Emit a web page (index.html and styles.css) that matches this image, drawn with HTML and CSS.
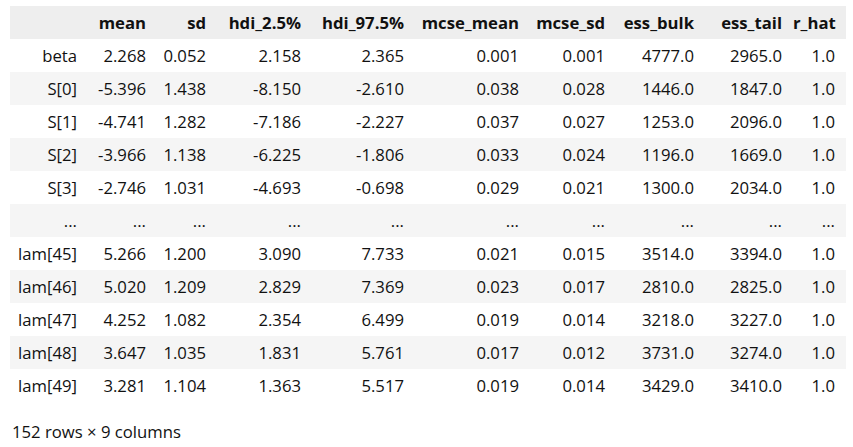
FILE: index.html
```html
<!DOCTYPE html>
<html>
<head>
<meta charset="utf-8">
<link rel="stylesheet" href="styles.css">
</head>
<body>
<div class="output">
<table class="dataframe">
<colgroup>
<col class="c-idx"><col class="c-mean"><col class="c-sd"><col class="c-h1"><col class="c-h2"><col class="c-mm"><col class="c-ms"><col class="c-eb"><col class="c-et"><col class="c-rh">
</colgroup>
<thead>
<tr><th></th><th>mean</th><th>sd</th><th>hdi_2.5%</th><th>hdi_97.5%</th><th>mcse_mean</th><th>mcse_sd</th><th>ess_bulk</th><th>ess_tail</th><th>r_hat</th></tr>
</thead>
<tbody>
<tr><th>beta</th><td>2.268</td><td>0.052</td><td>2.158</td><td>2.365</td><td>0.001</td><td>0.001</td><td>4777.0</td><td>2965.0</td><td>1.0</td></tr>
<tr><th>S[0]</th><td>-5.396</td><td>1.438</td><td>-8.150</td><td>-2.610</td><td>0.038</td><td>0.028</td><td>1446.0</td><td>1847.0</td><td>1.0</td></tr>
<tr><th>S[1]</th><td>-4.741</td><td>1.282</td><td>-7.186</td><td>-2.227</td><td>0.037</td><td>0.027</td><td>1253.0</td><td>2096.0</td><td>1.0</td></tr>
<tr><th>S[2]</th><td>-3.966</td><td>1.138</td><td>-6.225</td><td>-1.806</td><td>0.033</td><td>0.024</td><td>1196.0</td><td>1669.0</td><td>1.0</td></tr>
<tr><th>S[3]</th><td>-2.746</td><td>1.031</td><td>-4.693</td><td>-0.698</td><td>0.029</td><td>0.021</td><td>1300.0</td><td>2034.0</td><td>1.0</td></tr>
<tr><th>...</th><td>...</td><td>...</td><td>...</td><td>...</td><td>...</td><td>...</td><td>...</td><td>...</td><td>...</td></tr>
<tr><th>lam[45]</th><td>5.266</td><td>1.200</td><td>3.090</td><td>7.733</td><td>0.021</td><td>0.015</td><td>3514.0</td><td>3394.0</td><td>1.0</td></tr>
<tr><th>lam[46]</th><td>5.020</td><td>1.209</td><td>2.829</td><td>7.369</td><td>0.023</td><td>0.017</td><td>2810.0</td><td>2825.0</td><td>1.0</td></tr>
<tr><th>lam[47]</th><td>4.252</td><td>1.082</td><td>2.354</td><td>6.499</td><td>0.019</td><td>0.014</td><td>3218.0</td><td>3227.0</td><td>1.0</td></tr>
<tr><th>lam[48]</th><td>3.647</td><td>1.035</td><td>1.831</td><td>5.761</td><td>0.017</td><td>0.012</td><td>3731.0</td><td>3274.0</td><td>1.0</td></tr>
<tr><th>lam[49]</th><td>3.281</td><td>1.104</td><td>1.363</td><td>5.517</td><td>0.019</td><td>0.014</td><td>3429.0</td><td>3410.0</td><td>1.0</td></tr>
</tbody>
</table>
<p class="shape">152 rows × 9 columns</p>
</div>
</body>
</html>
```
FILE: styles.css
```css
html, body {
  margin: 0;
  padding: 0;
  background: #ffffff;
}
body {
  font-family: "Open Sans", "Noto Sans", sans-serif;
  font-size: 16.7px;
  color: #111111;
}
.output {
  padding: 6px 0 0 10px;
}
.dataframe {
  border-collapse: collapse;
  border-spacing: 0;
  table-layout: fixed;
  width: 836px;
}
.c-idx { width: 78px; }
.c-mean { width: 69px; }
.c-sd { width: 60px; }
.c-h1 { width: 95px; }
.c-h2 { width: 103px; }
.c-mm { width: 115px; }
.c-ms { width: 86px; }
.c-eb { width: 89px; }
.c-et { width: 88px; }
.c-rh { width: 53px; }
.dataframe th,
.dataframe td {
  height: 33px;
  padding: 0 11px 0 0;
  text-align: right;
  white-space: nowrap;
  vertical-align: middle;
  box-sizing: border-box;
}
.dataframe thead th {
  font-weight: 700;
  background: #eeeeee;
}
.dataframe tbody th {
  font-weight: 400;
}
.dataframe tbody tr:nth-child(even) {
  background: #f5f5f5;
}
.shape {
  margin: 18px 0 0 2px;
  line-height: 24px;
}
```
